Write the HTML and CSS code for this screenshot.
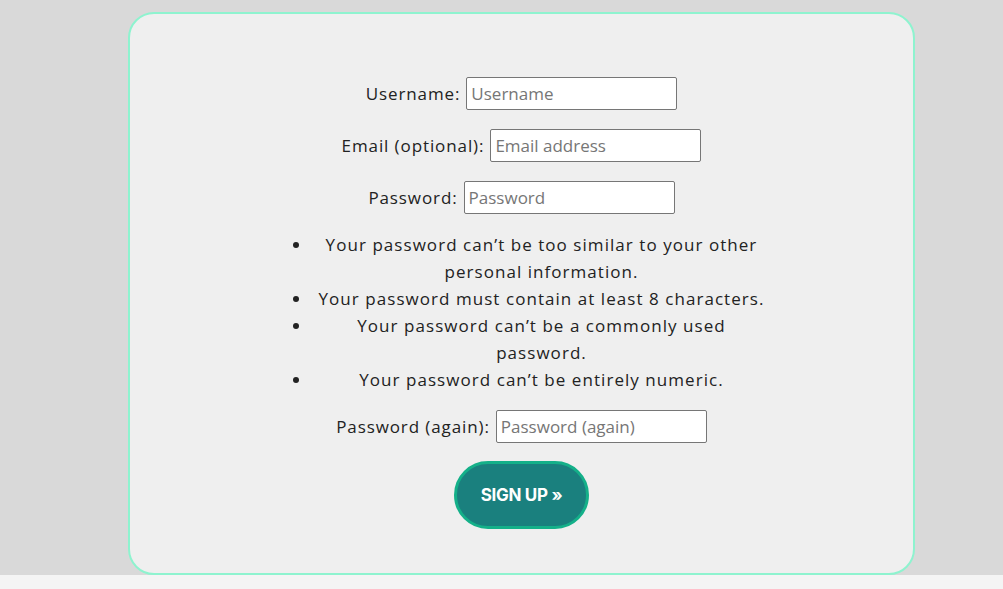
FILE: index.html
```html
<!DOCTYPE html>
<html lang="en">
<head>
<meta charset="utf-8">
<title>Sign up</title>
<link rel="stylesheet" href="styles.css">
</head>
<body>
<div class="stage">
  <form class="card">
    <div class="row">
      <label for="u">Username:</label>
      <input id="u" class="field" type="text" placeholder="Username">
    </div>
    <div class="row">
      <label for="e">Email (optional):</label>
      <input id="e" class="field" type="text" placeholder="Email address">
    </div>
    <div class="row">
      <label for="p1">Password:</label>
      <input id="p1" class="field" type="password" placeholder="Password">
    </div>
    <ul class="help">
      <li>Your password can’t be too similar to your other personal information.</li>
      <li>Your password must contain at least 8 characters.</li>
      <li>Your password can’t be a commonly used password.</li>
      <li>Your password can’t be entirely numeric.</li>
    </ul>
    <div class="row">
      <label for="p2">Password (again):</label>
      <input id="p2" class="field" type="password" placeholder="Password (again)">
    </div>
    <div class="actions">
      <button type="button" class="btn">SIGN UP »</button>
    </div>
  </form>
</div>
</body>
</html>
```
FILE: styles.css
```css
html, body {
  margin: 0;
  padding: 0;
}
body {
  background: #f4f4f4;
  font-family: "Open Sans", "Noto Sans", sans-serif;
  color: #222;
}
.stage {
  background: #d9d9d9;
  padding-top: 12px;
}
.card {
  box-sizing: border-box;
  width: 787px;
  height: 563px;
  margin-left: 128px;
  background: #efefef;
  border: 2px solid #8ef3cf;
  border-radius: 26px;
  padding-top: 63px;
  display: flex;
  flex-direction: column;
  align-items: center;
}
.row {
  display: flex;
  align-items: center;
  justify-content: center;
  gap: 6px;
  height: 33px;
  margin-bottom: 19px;
  font-size: 17px;
  letter-spacing: 0.9px;
}
.field {
  box-sizing: border-box;
  width: 211px;
  height: 33px;
  border: 1px solid #767676;
  border-radius: 2px;
  background: #fff;
  padding: 0 4px;
  font-family: inherit;
  font-size: 17px;
  letter-spacing: 0;
  color: #222;
}
.field::placeholder {
  color: #767676;
}
.help {
  box-sizing: border-box;
  width: 500px;
  margin: -2px 0 17px 0;
  padding: 0 0 0 40px;
  font-size: 17px;
  line-height: 27px;
  letter-spacing: 1.05px;
  text-align: center;
}
.actions {
  display: flex;
  justify-content: center;
  margin-top: -1px;
}
.btn {
  box-sizing: border-box;
  width: 135px;
  height: 68px;
  border: 3px solid #14b089;
  border-radius: 34px;
  background: #1a807e;
  color: #fff;
  font-family: Inter, "Noto Sans", sans-serif;
  font-weight: 700;
  font-size: 17px;
  letter-spacing: -0.3px;
  cursor: pointer;
}
```
